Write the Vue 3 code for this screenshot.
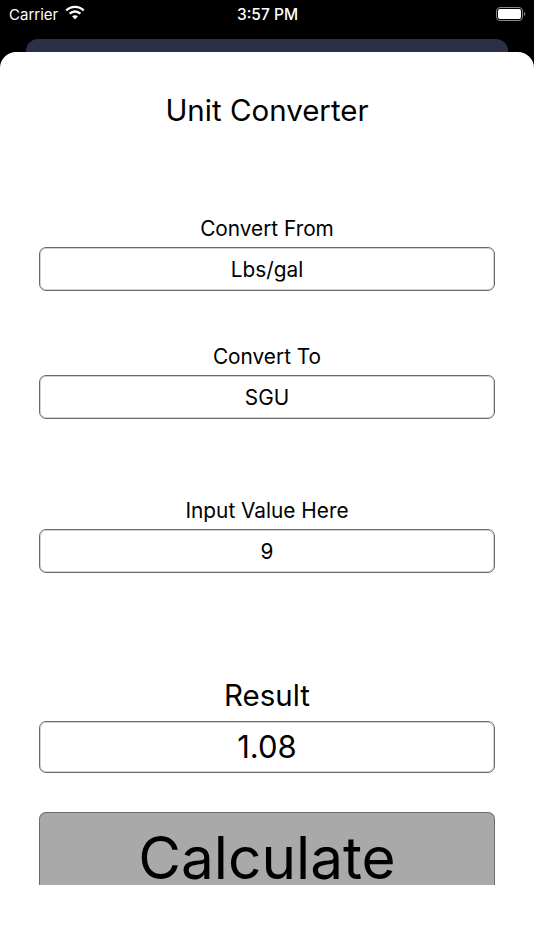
<template>
  <div class="screen">
    <div class="statusBar">
      <div class="statusLeft">
        <span>Carrier</span>
        <svg class="wifi" viewBox="0 0 20 15" width="20" height="15">
          <path d="M1.300 5.300C3.600 3.100 6.600 1.800 10 1.800s6.400 1.300 8.700 3.500" fill="none" stroke="#fff" stroke-width="2.300"/>
          <path d="M4.600 8.700C6 7.400 7.900 6.500 10 6.500s4 .9 5.400 2.200" fill="none" stroke="#fff" stroke-width="2.300"/>
          <path d="M10 10.200c-1.100 0-2.100.4-2.900 1.100l2.900 3.200 2.900-3.200c-.8-.7-1.800-1.100-2.900-1.100z" fill="#fff"/>
        </svg>
      </div>
      <span class="time">3:57 PM</span>
      <svg class="battery" viewBox="0 0 30 14" width="30" height="14">
        <rect x="0.500" y="0.500" width="26" height="13" rx="3.500" fill="none" stroke="#8a8a8a"/>
        <rect x="2" y="2" width="23" height="10" rx="2" fill="#fff"/>
        <path d="M28 5v4c.8-.3 1.300-1.100 1.300-2S28.800 5.300 28 5z" fill="#8a8a8a"/>
      </svg>
    </div>
    <div class="backCard"></div>
    <div class="sheet">
      <h1>Unit Converter</h1>
      <div class="form">
        <div v-for="f in fields" :key="f.label" class="field" :class="f.cls">
          <label>{{ f.label }}</label>
          <div class="box">{{ f.value }}</div>
        </div>
        <button class="calc">Calculate</button>
      </div>
    </div>
  </div>
</template>

<script setup>
const fields = [
  { label: 'Convert From', value: 'Lbs/gal', cls: 'from' },
  { label: 'Convert To', value: 'SGU', cls: 'to' },
  { label: 'Input Value Here', value: '9', cls: 'input' },
  { label: 'Result', value: '1.08', cls: 'result' }
]
</script>

<style>
html, body {
  margin: 0;
  background: #000;
}
</style>

<style scoped>
.screen {
  width: 534px;
  height: 950px;
  background: #000;
  overflow: hidden;
  font-family: Inter, "Liberation Sans", sans-serif;
  color: #000;
}
.statusBar {
  height: 28px;
  padding: 0 8px 0 9px;
  display: grid;
  grid-template-columns: 1fr auto 1fr;
  align-items: center;
  color: #fff;
  font-size: 15px;
}
.statusLeft {
  display: flex;
  align-items: center;
  gap: 7px;
}
.wifi {
  margin-top: -4px;
}
.time {
  font-size: 15.500px;
  font-weight: 500;
}
.battery {
  justify-self: end;
}
.backCard {
  height: 24px;
  margin: 11px 26px 0;
  background: #2b3046;
  border-radius: 12px 12px 0 0;
}
.sheet {
  margin-top: -11px;
  position: relative;
  height: 898px;
  background: #fff;
  border-radius: 16px 16px 0 0;
}
h1 {
  margin: 0;
  padding-top: 39px;
  height: 38px;
  line-height: 38px;
  text-align: center;
  font-size: 29.500px;
  font-weight: 400;
}
.form {
  padding: 0 39px;
}
.field {
  display: flex;
  flex-direction: column;
  align-items: stretch;
  text-align: center;
}
.field label {
  font-size: 20.800px;
  line-height: 26px;
  padding-top: 1px;
  margin-bottom: 5px;
}
.box {
  box-sizing: border-box;
  height: 44px;
  line-height: 44px;
  border: 1px solid #6a6a6a;
  box-shadow: inset 0 0 0 1px rgba(128, 128, 128, 0.35);
  border-radius: 7px;
  font-size: 20.800px;
}
.from {
  margin-top: 86px;
}
.to {
  margin-top: 52px;
}
.input {
  margin-top: 78px;
}
.result {
  margin-top: 104px;
}
.result label {
  font-size: 29.500px;
  line-height: 36px;
  padding-top: 0;
  margin-bottom: 8px;
}
.result .box {
  height: 52px;
  line-height: 50px;
  font-size: 31px;
}
.calc {
  display: block;
  box-sizing: border-box;
  width: 100%;
  height: 73px;
  margin-top: 39px;
  padding: 17px 0 0;
  background: #a9a9a9;
  border: 1px solid #6a6a6a;
  border-bottom: none;
  border-radius: 7px 7px 0 0;
  color: #000;
  font-family: inherit;
  font-size: 58.500px;
  line-height: 55px;
}
</style>
